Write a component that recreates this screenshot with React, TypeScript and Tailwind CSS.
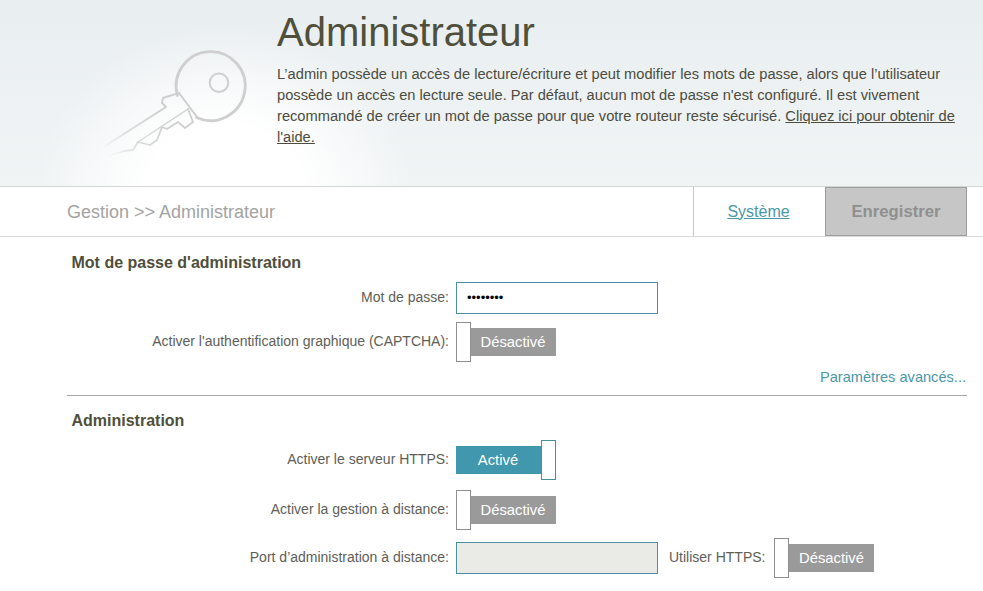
import React from "react";

function Toggle({ on = false }: { on?: boolean }) {
  if (on) {
    return (
      <div className="flex items-center h-[40px] w-[100px]">
        <div className="h-[28px] w-[86px] bg-[#4197ad] text-white text-[14.8px] flex items-center justify-center pt-[1px] pr-[2px]">Activé</div>
        <div className="h-[40px] w-[15px] -ml-px bg-white border border-[#4a8f9f]" />
      </div>
    );
  }
  return (
    <div className="flex items-center h-[40px] w-[100px]">
      <div className="h-[40px] w-[15px] bg-white border border-[#8f8f8f] relative z-10" />
      <div className="h-[28px] w-[86px] -ml-px bg-[#9a9a9a] text-white text-[14.8px] flex items-center justify-center pt-[1px]">Désactivé</div>
    </div>
  );
}

function Row({ label, className, children }: { label: string; className: string; children: React.ReactNode }) {
  return (
    <div className={"flex items-center " + className}>
      <div className="w-[449px] pb-[2px] text-right text-[14px] text-[#5e5e58] whitespace-nowrap">{label}</div>
      <div className="ml-[7px] flex items-center">{children}</div>
    </div>
  );
}

function Key() {
  return (
    <svg width="150" height="125" viewBox="100 45 150 125" className="mt-[45px] ml-[100px] shrink-0">
      <defs>
        <linearGradient id="fade" gradientUnits="userSpaceOnUse" x1="108" y1="158" x2="165" y2="118">
          <stop offset="0" stopColor="#d0d0d0" stopOpacity="0" />
          <stop offset="0.45" stopColor="#d2d2d2" stopOpacity="0.75" />
          <stop offset="1" stopColor="#cfcfcf" />
        </linearGradient>
      </defs>
      <g fill="none" stroke="url(#fade)" strokeLinejoin="round" strokeLinecap="round">
        <path strokeWidth="2.8" d="M177.5 95.5 A34.5 34.5 0 1 1 196.5 117.5" />
        <path strokeWidth="2" d="M179 93 L163 98 L162 103 L166 107 L105 146" />
        <path strokeWidth="2" d="M179 93 L197 117" />
        <path strokeWidth="1.8" d="M188 109 L193 122 L185 128 L178 122 L167 129 L162 127 L157 140 L150 145 L138 142 L133 150 L124 151 L108 156" />
        <path strokeWidth="1.4" d="M188 109 L138 142" />
      </g>
      <circle cx="219" cy="82.7" r="9.3" fill="none" stroke="#cfcfcf" strokeWidth="2" />
    </svg>
  );
}

export default function App() {
  return (
    <div className="w-[983px] h-[591px] overflow-hidden bg-white font-['Liberation_Sans',Arial,sans-serif] text-[#58585a]">
      <header className="flex h-[187px] border-b border-[#d4d6d6] bg-[radial-gradient(ellipse_190px_170px_at_225px_195px,#ffffff_0%,#ffffff_42%,rgba(255,255,255,0)_100%),linear-gradient(180deg,#e9eef0_0%,#f0f4f5_100%)]">
        <Key />
        <div className="ml-[27px] w-[690px] shrink-0">
          <h1 className="mt-[10px] h-[44px] text-[40px] leading-[44px] text-[#4f4f3b]">Administrateur</h1>
          <p className="mt-[10px] w-[684px] text-[14.66px] leading-[21px] text-[#4c4c40]">
            L’admin possède un accès de lecture/écriture et peut modifier les mots de passe, alors que l’utilisateur possède un accès en lecture seule. Par défaut, aucun mot de passe n'est configuré. Il est vivement recommandé de créer un mot de passe pour que votre routeur reste sécurisé.{" "}
            <span className="underline">Cliquez ici pour obtenir de l'aide.</span>
          </p>
        </div>
      </header>
      <nav className="flex h-[50px] border-b border-[#d9d9d9] pl-[67px]">
        <div className="flex-1 text-[18px] text-[#a3a3a3] leading-[50px]">Gestion &gt;&gt; Administrateur</div>
        <div className="w-[132px] border-l border-[#c9c9c9] flex items-center justify-center text-[16px] text-[#4a97a8] underline pr-[2px]">Système</div>
        <div className="w-[142px] mr-[16px] bg-[#c6c6c6] border border-[#9e9e9e] flex items-center justify-center text-[16.7px] font-bold text-[#8f8f8f]">Enregistrer</div>
      </nav>
      <main>
        <h2 className="ml-[71.5px] mt-[16px] text-[16px] leading-[20px] font-bold text-[#4f4f3b]">Mot de passe d'administration</h2>
        <Row label="Mot de passe:" className="mt-[9px] h-[32px]">
          <div className="w-[202px] h-[32px] border border-[#4a8f9f] bg-white flex items-center pl-[10px] text-[13px] text-black">••••••••</div>
        </Row>
        <Row label="Activer l'authentification graphique (CAPTCHA):" className="mt-[8px] h-[40px]">
          <Toggle />
        </Row>
        <div className="mr-[17px] mt-[6px] text-right text-[14.6px] leading-[18px] text-[#4a97a8]">Paramètres avancés...</div>
        <div className="mx-[67px] w-[900px] mt-[9px] border-t border-[#a8a8a8]" />
        <h2 className="ml-[71.5px] mt-[15px] text-[16px] leading-[20px] font-bold text-[#4f4f3b]">Administration</h2>
        <Row label="Activer le serveur HTTPS:" className="mt-[9px] h-[40px]">
          <Toggle on />
        </Row>
        <Row label="Activer la gestion à distance:" className="mt-[10px] h-[40px]">
          <Toggle />
        </Row>
        <Row label="Port d’administration à distance:" className="mt-[8px] h-[40px]">
          <div className="w-[202px] h-[32px] border border-[#4a8f9f] bg-[#eaeae6]" />
          <span className="ml-[11px] pb-[2px] text-[14px] text-[#5e5e58] whitespace-nowrap">Utiliser HTTPS:</span>
          <div className="ml-[9px]"><Toggle /></div>
        </Row>
      </main>
    </div>
  );
}
